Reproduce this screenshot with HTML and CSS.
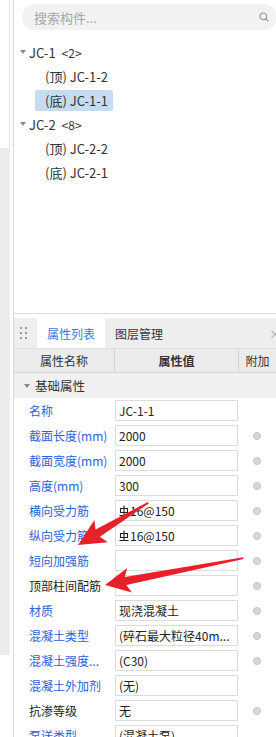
FILE: index.html
```html
<!DOCTYPE html>
<html lang="zh-CN">
<head>
    <meta charset="UTF-8">
    <meta name="viewport" content="width=device-width, initial-scale=1.0">
    <title>构件属性</title>
    <link rel="stylesheet" href="styles.css">
</head>
<body>
    <div class="layout">
        <div class="rail">
            <div class="rail-line"></div>
            <div class="rail-thumb"></div>
        </div>
        <div class="panel">
            <div class="tree-pane">
                <div class="search">
                    <span class="search-text">搜索构件...</span>
                    <svg class="search-icon" width="10" height="10" viewBox="0 0 10 10">
                        <circle cx="4.3" cy="4.3" r="3.3" fill="none" stroke="#9a9a9a" stroke-width="1.2"/>
                        <path d="M6.8 6.8 L9.2 9.2" stroke="#9a9a9a" stroke-width="1.3"/>
                    </svg>
                </div>
                <div class="tree">
                    <div class="node node-parent"><span class="caret"></span>JC-1<span class="count">&lt;2&gt;</span></div>
                    <div class="node node-child"><span class="node-label">(顶) JC-1-2</span></div>
                    <div class="node node-child"><span class="node-label selected">(底) JC-1-1</span></div>
                    <div class="node node-parent"><span class="caret"></span>JC-2<span class="count">&lt;8&gt;</span></div>
                    <div class="node node-child"><span class="node-label">(顶) JC-2-2</span></div>
                    <div class="node node-child"><span class="node-label">(底) JC-2-1</span></div>
                </div>
            </div>

            <div class="props-pane">
                <div class="tabs">
                    <div class="handle">
                        <span></span><span></span><span></span><span></span><span></span><span></span>
                    </div>
                    <div class="tab active">属性列表</div>
                    <div class="tab">图层管理</div>
                    <div class="tab-close">×</div>
                </div>
                <div class="grid-head">
                    <div class="head-cell">属性名称</div>
                    <div class="head-cell bold">属性值</div>
                    <div class="head-cell">附加</div>
                </div>
                <div class="group"><span class="caret"></span>基础属性</div>

                <div class="row">
                    <div class="label blue">名称</div>
                    <div class="field">JC-1-1</div>
                    <div class="extra"></div>
                </div>
                <div class="row">
                    <div class="label blue">截面长度(mm)</div>
                    <div class="field">2000</div>
                    <div class="extra"><span class="radio"></span></div>
                </div>
                <div class="row">
                    <div class="label blue">截面宽度(mm)</div>
                    <div class="field">2000</div>
                    <div class="extra"><span class="radio"></span></div>
                </div>
                <div class="row">
                    <div class="label blue">高度(mm)</div>
                    <div class="field">300</div>
                    <div class="extra"><span class="radio"></span></div>
                </div>
                <div class="row">
                    <div class="label blue">横向受力筋</div>
                    <div class="field"><svg class="rebar" width="10" height="12" viewBox="0 0 10 12"><path d="M5 0.5V10.5M1.5 3.5H8.5V7.5H1.5ZM0.5 10.5H9.5" fill="none" stroke="#222" stroke-width="1.1"/></svg>16@150</div>
                    <div class="extra"><span class="radio"></span></div>
                </div>
                <div class="row">
                    <div class="label blue">纵向受力筋</div>
                    <div class="field"><svg class="rebar" width="10" height="12" viewBox="0 0 10 12"><path d="M5 0.5V10.5M1.5 3.5H8.5V7.5H1.5ZM0.5 10.5H9.5" fill="none" stroke="#222" stroke-width="1.1"/></svg>16@150</div>
                    <div class="extra"><span class="radio"></span></div>
                </div>
                <div class="row">
                    <div class="label blue">短向加强筋</div>
                    <div class="field"></div>
                    <div class="extra"><span class="radio"></span></div>
                </div>
                <div class="row">
                    <div class="label">顶部柱间配筋</div>
                    <div class="field"></div>
                    <div class="extra"><span class="radio"></span></div>
                </div>
                <div class="row">
                    <div class="label blue">材质</div>
                    <div class="field">现浇混凝土</div>
                    <div class="extra"><span class="radio"></span></div>
                </div>
                <div class="row">
                    <div class="label blue">混凝土类型</div>
                    <div class="field">(碎石最大粒径40m...</div>
                    <div class="extra"><span class="radio"></span></div>
                </div>
                <div class="row">
                    <div class="label blue">混凝土强度...</div>
                    <div class="field">(C30)</div>
                    <div class="extra"><span class="radio"></span></div>
                </div>
                <div class="row">
                    <div class="label blue">混凝土外加剂</div>
                    <div class="field">(无)</div>
                    <div class="extra"></div>
                </div>
                <div class="row">
                    <div class="label">抗渗等级</div>
                    <div class="field">无</div>
                    <div class="extra"><span class="radio"></span></div>
                </div>
                <div class="row">
                    <div class="label blue">泵送类型</div>
                    <div class="field">(混凝土泵)</div>
                    <div class="extra"></div>
                </div>
            </div>
        </div>
    </div>

    <svg class="marks" width="276" height="737" viewBox="0 0 276 737">
        <g transform="translate(78 545) rotate(149)">
            <polygon points="-82,-0.8 -23,-4.2 -27,-13 0,0 -27,13 -23,4.2 -82,0.8" fill="#e8202a"/>
        </g>
        <g transform="translate(105 585) rotate(169)">
            <polygon points="-141,-0.8 -21,-4 -25,-12.5 0,0 -25,12.5 -21,4 -141,0.8" fill="#e8202a"/>
        </g>
    </svg>
</body>
</html>
```

FILE: styles.css
```css
* {
    box-sizing: border-box;
}
body {
    margin: 0;
    width: 276px;
    height: 737px;
    overflow: hidden;
    position: relative;
    font-family: "Noto Sans CJK SC", "Noto Sans", sans-serif;
    font-size: 12px;
    color: #333;
    background: #fff;
}
.layout {
    display: flex;
    height: 737px;
}
.rail {
    width: 13px;
    flex: none;
    display: flex;
    flex-direction: column;
}
.rail-line {
    width: 1px;
    height: 148px;
    margin-left: 9px;
    background: #e2e2e2;
}
.rail-thumb {
    width: 10px;
    height: 507px;
    background: #ececec;
}
.panel {
    flex: 1;
    min-width: 0;
    border-left: 1px solid #d9d9d9;
    display: flex;
    flex-direction: column;
}
.tree-pane {
    height: 314px;
    flex: none;
    padding-top: 4px;
    border-bottom: 1px solid #dcdcdc;
}
.search {
    height: 26px;
    margin: 0 -1px 0 8px;
    border-radius: 13px;
    background: #f2f2f2;
    display: flex;
    align-items: center;
    justify-content: space-between;
    padding: 0 8px 0 12px;
}
.search-text {
    color: #a6a6a6;
    font-size: 13px;
}
.tree {
    margin-top: 10px;
    font-size: 13px;
    color: #333;
}
.node {
    height: 24px;
    display: flex;
    align-items: center;
    white-space: nowrap;
}
.node-parent {
    padding-left: 6px;
}
.caret {
    width: 0;
    height: 0;
    border-left: 3px solid transparent;
    border-right: 3px solid transparent;
    border-top: 4px solid #8a8a8a;
    margin-right: 3px;
}
.count {
    margin-left: 6px;
    font-size: 12px;
}
.node-child {
    padding-left: 21px;
}
.node-label {
    height: 21px;
    line-height: 21px;
    padding: 0 5px 0 10px;
    border-radius: 2px;
}
.node-label.selected {
    background: #c6dcf2;
}
.props-pane {
    margin-top: 4px;
    flex: 1;
    min-height: 0;
}
.tabs {
    height: 30px;
    background: #eeeeee;
    display: flex;
    align-items: stretch;
}
.handle {
    width: 23px;
    display: grid;
    grid-template-columns: 2px 2px;
    grid-auto-rows: 2px;
    column-gap: 3px;
    row-gap: 3px;
    align-content: center;
    padding-left: 6px;
}
.handle span {
    background: #9a9a9a;
}
.tab {
    padding: 0 10px;
    display: flex;
    align-items: center;
    color: #333;
}
.tab.active {
    background: #fff;
    color: #3a7be8;
}
.tab-close {
    margin-left: auto;
    margin-right: -5px;
    display: flex;
    align-items: center;
    color: #aaa;
    font-size: 12px;
}
.grid-head {
    display: grid;
    grid-template-columns: 100px 124px 1fr;
    height: 25px;
    background: #ebebeb;
    border-top: 1px solid #dedede;
    border-bottom: 1px solid #d6d6d6;
}
.head-cell {
    display: flex;
    align-items: center;
    justify-content: center;
    color: #333;
}
.head-cell + .head-cell {
    border-left: 1px solid #d4d4d4;
}
.head-cell.bold {
    font-weight: bold;
}
.group {
    height: 25px;
    background: #f0f0f0;
    display: flex;
    align-items: center;
    padding-left: 10px;
    color: #333;
    font-size: 12.5px;
}
.group .caret {
    margin-right: 5px;
}
.row {
    display: grid;
    grid-template-columns: 100px 124px 1fr;
    height: 25px;
    align-items: center;
}
.label {
    padding-left: 15px;
    color: #222;
    white-space: nowrap;
}
.label.blue {
    color: #2a63d8;
}
.field {
    margin-left: 1px;
    height: 21px;
    border: 1px solid #dcdcdc;
    padding-left: 3px;
    line-height: 19px;
    color: #222;
    white-space: nowrap;
    overflow: hidden;
    display: flex;
    align-items: center;
}
.rebar {
    margin-right: 1px;
}
.extra {
    display: flex;
    justify-content: center;
}
.radio {
    width: 8px;
    height: 8px;
    border-radius: 50%;
    background: #d8d8d8;
    border: 1px solid #c4c4c4;
}
.marks {
    position: absolute;
    left: 0;
    top: 0;
    pointer-events: none;
}
```
